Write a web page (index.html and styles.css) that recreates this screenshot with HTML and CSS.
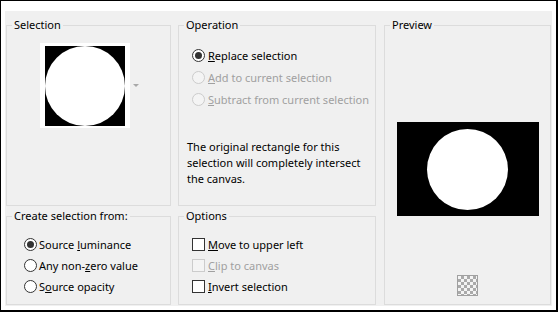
FILE: index.html
```html
<!DOCTYPE html>
<html lang="en">
<head>
    <meta charset="UTF-8">
    <meta name="viewport" content="width=device-width, initial-scale=1.0">
    <title>Selection From Mask</title>
    <link rel="stylesheet" href="styles.css">
</head>
<body>
    <div class="window">
        <div class="panel">
            <fieldset class="box box-selection">
                <legend>Selection</legend>
                <div class="thumb-row">
                    <div class="thumb">
                        <div class="mask"><div class="disc"></div></div>
                    </div>
                    <span class="drop-arrow"></span>
                </div>
            </fieldset>

            <fieldset class="box box-operation">
                <legend>Operation</legend>
                <div class="choices op-choices">
                    <label class="opt"><span class="radio checked"></span><span><u>R</u>eplace selection</span></label>
                    <label class="opt disabled"><span class="radio"></span><span><u>A</u>dd to current selection</span></label>
                    <label class="opt disabled"><span class="radio"></span><span><u>S</u>ubtract from current selection</span></label>
                </div>
                <p class="note">The original rectangle for this<br>selection will completely intersect<br>the canvas.</p>
            </fieldset>

            <fieldset class="box box-preview">
                <legend>Preview</legend>
                <div class="canvas"><div class="disc big"></div></div>
                <span class="checker"></span>
            </fieldset>

            <fieldset class="box box-source">
                <legend>Create selection from:</legend>
                <div class="choices src-choices">
                    <label class="opt"><span class="radio checked"></span><span>Source <u>l</u>uminance</span></label>
                    <label class="opt"><span class="radio"></span><span>Any non-<u>z</u>ero value</span></label>
                    <label class="opt"><span class="radio"></span><span>S<u>o</u>urce opacity</span></label>
                </div>
            </fieldset>

            <fieldset class="box box-options">
                <legend>Options</legend>
                <div class="choices opt-choices">
                    <label class="opt"><span class="check"></span><span><u>M</u>ove to upper left</span></label>
                    <label class="opt disabled"><span class="check"></span><span><u>C</u>lip to canvas</span></label>
                    <label class="opt"><span class="check"></span><span><u>I</u>nvert selection</span></label>
                </div>
            </fieldset>
        </div>
    </div>
</body>
</html>
```

FILE: styles.css
```css
body {
    margin: 0;
    font-family: "Noto Sans", "Open Sans", sans-serif;
    font-size: 11px;
    color: #000;
    background-color: #fff;
}
.window {
    width: 558px;
    height: 312px;
    box-sizing: border-box;
    border: 1px solid #000;
    border-right-width: 2px;
    border-bottom-width: 2px;
    padding: 10px 4px 4px 4px;
    background-color: #fff;
}
.panel {
    height: 100%;
    box-sizing: border-box;
    background-color: #f0f0f0;
    padding: 6px 1px 1px 1px;
    display: grid;
    grid-template-columns: 165px 198px 168px;
    grid-template-rows: 189px 97px;
    column-gap: 7px;
    row-gap: 2px;
}
.box {
    margin: 0;
    padding: 0;
    min-width: 0;
    border: 1px solid #dcdcdc;
    display: flex;
    flex-direction: column;
}
legend {
    margin-left: 5px;
    padding: 0 2px;
    line-height: 16px;
}
.box-preview {
    grid-column: 3;
    grid-row: 1 / span 2;
    margin-left: 1px;
}
.box-source {
    grid-column: 1;
    grid-row: 2;
}
.box-options {
    grid-column: 2;
    grid-row: 2;
}

/* selection thumbnail */
.thumb-row {
    display: flex;
    align-items: center;
    margin: 10px 0 0 33px;
}
.thumb {
    background-color: #fff;
    padding: 3px 5px 2px 5px;
}
.mask {
    width: 80px;
    height: 80px;
    background-color: #000;
    display: flex;
    align-items: center;
    justify-content: center;
}
.disc {
    width: 80px;
    height: 80px;
    border-radius: 50%;
    background-color: #fff;
}
.drop-arrow {
    margin-left: 3px;
    width: 0;
    height: 0;
    border-left: 3px solid transparent;
    border-right: 3px solid transparent;
    border-top: 3px solid #a8a8a8;
}

/* radio and check rows */
.choices {
    display: flex;
    flex-direction: column;
}
.op-choices {
    margin-top: 11px;
    padding-left: 13px;
}
.op-choices .opt {
    height: 22px;
}
.src-choices {
    margin-top: 10px;
    padding-left: 17px;
}
.src-choices .opt {
    gap: 2px;
}
.opt-choices {
    margin-top: 10px;
    padding-left: 13px;
}
.opt {
    display: flex;
    align-items: center;
    gap: 3px;
    height: 21px;
    white-space: nowrap;
}
.opt.disabled {
    color: #a0a0a0;
}
.radio {
    position: relative;
    width: 13px;
    height: 13px;
    box-sizing: border-box;
    border: 1px solid #333;
    border-radius: 50%;
    background-color: #fff;
    flex: none;
}
.radio.checked::after {
    content: "";
    position: absolute;
    left: 2px;
    top: 2px;
    width: 7px;
    height: 7px;
    border-radius: 50%;
    background-color: #333;
}
.check {
    width: 13px;
    height: 13px;
    box-sizing: border-box;
    border: 1px solid #333;
    background-color: #fff;
    flex: none;
}
.disabled .radio,
.disabled .check {
    border-color: #cccccc;
    background-color: #f4f4f4;
}
.note {
    margin: 29px 0 0 8px;
    line-height: 16px;
}

/* preview */
.canvas {
    width: 142px;
    height: 94px;
    margin: 89px auto 0;
    background-color: #000;
    display: flex;
    align-items: center;
    justify-content: center;
}
.disc.big {
    width: 81px;
    height: 81px;
}
.checker {
    display: block;
    width: 21px;
    height: 21px;
    box-sizing: border-box;
    margin: auto auto 8px;
    border: 1px solid #a0a0a0;
    background-color: #fff;
    background-image: conic-gradient(#aaaaaa 25%, #f4f4f4 0 50%, #aaaaaa 0 75%, #f4f4f4 0);
    background-size: 6px 6px;
}
```
